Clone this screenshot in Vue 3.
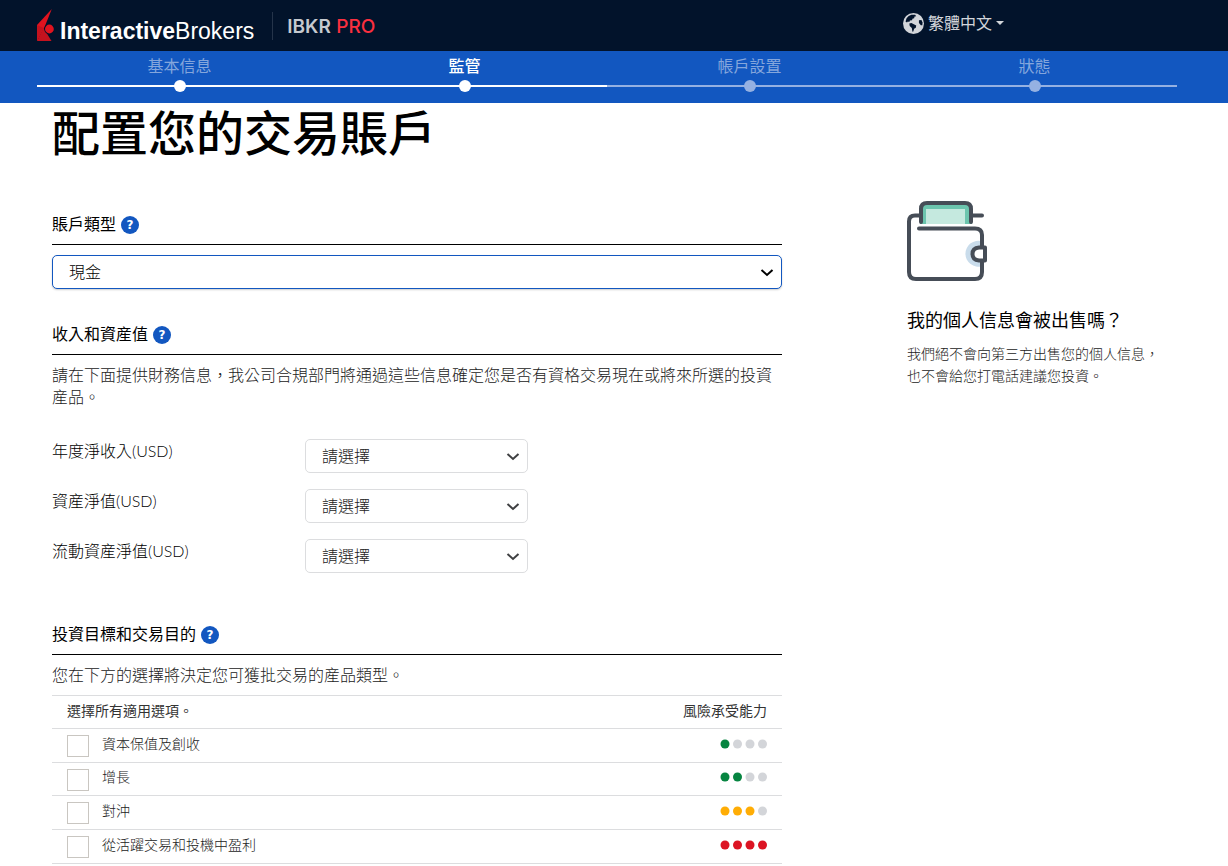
<script setup>
import { ref } from 'vue'

const steps = [
  { name: '基本信息', state: 'done' },
  { name: '監管', state: 'current' },
  { name: '帳戶設置', state: 'todo' },
  { name: '狀態', state: 'todo' },
]
const accountType = ref('cash')
const amounts = ref([
  { id: 'income', label: '年度淨收入(USD)', value: '' },
  { id: 'worth', label: '資産淨值(USD)', value: '' },
  { id: 'liquid', label: '流動資産淨值(USD)', value: '' },
])
const goals = ref([
  { id: 'preserve', label: '資本保值及創收', level: 1, tone: 'green', checked: false },
  { id: 'growth', label: '增長', level: 2, tone: 'green', checked: false },
  { id: 'hedge', label: '對沖', level: 3, tone: 'amber', checked: false },
  { id: 'active', label: '從活躍交易和投機中盈利', level: 4, tone: 'red', checked: false },
])
const dotX = [5, 17.5, 30, 42.5]
</script>

<template>
  <div class="page">
    <header class="topbar">
      <div class="container topbar-inner">
        <a class="brand" href="#" aria-label="InteractiveBrokers">
          <svg class="brand-mark" viewBox="0 0 17 32" aria-hidden="true">
            <path d="M14.8 0 L0 16 V32 L7.4 18.500 Z" fill="#e0131f" />
            <path d="M0 32 L6.6 19 L14.5 32 Z" fill="#c4121e" />
            <path d="M0 16 L6.6 19 L0 32 Z" fill="#c4121e" />
            <circle cx="12.4" cy="20" r="5.2" fill="#02132b" />
            <circle cx="12.4" cy="20" r="4.4" fill="#e0131f" />
          </svg>
          <span class="brand-name"><b>Interactive</b>Brokers</span>
        </a>
        <div class="product"><b>IBKR</b> <span>PRO</span></div>
        <button class="language" type="button">
          <svg class="globe" viewBox="0 0 20 20" aria-hidden="true">
            <circle cx="10" cy="10" r="10" fill="#d2d5da" />
            <path d="M8 1.6 L11.5 1.6 L12.6 3 L11 3.4 L10.6 5 L9 5.4 L8.6 7 L6.6 7.2 L6 8.6 L4.6 8 L3.8 9 L2.4 8 L3.4 5 L5.4 2.9 Z" fill="#02132b" />
            <path d="M6 10 L8 9.6 L12.6 12 L12.2 14 L10.6 15 L9.8 17.6 L9 17.8 L8.4 14.2 L6.4 12.4 Z" fill="#02132b" />
            <path d="M15.2 7 L17.6 6.6 L18.6 9 L18.4 11.6 L17 11.6 L15.2 9.6 Z" fill="#02132b" />
          </svg>
          <span>繁體中文</span>
          <svg class="caret" viewBox="0 0 8 4" aria-hidden="true"><path d="M0 0 H8 L4 4 Z" fill="#d2d5da" /></svg>
        </button>
      </div>
    </header>

    <nav class="progress">
      <ol class="container steps">
        <li v-for="s in steps" :key="s.name" :class="['step', s.state]">
          <span class="step-name">{{ s.name }}</span>
          <span class="track"><span class="node"></span></span>
        </li>
      </ol>
    </nav>

    <main class="container content">
      <h1>配置您的交易賬戶</h1>
      <div class="columns">
        <form class="form" @submit.prevent>
          <section class="account">
            <div class="heading">
              <h2><label for="account-type">賬戶類型</label></h2>
              <button class="help" type="button" aria-label="賬戶類型">?</button>
            </div>
            <div class="select active">
              <select id="account-type" v-model="accountType"><option value="cash">現金</option></select>
              <svg viewBox="0 0 14 8" aria-hidden="true"><path d="M1.5 1 L7 6 L12.5 1" /></svg>
            </div>
          </section>

          <section class="assets">
            <div class="heading">
              <h2>收入和資産值</h2>
              <button class="help" type="button" aria-label="收入和資産值">?</button>
            </div>
            <p class="note">請在下面提供財務信息，我公司合規部門將通過這些信息確定您是否有資格交易現在或將來所選的投資産品。</p>
            <div v-for="a in amounts" :key="a.id" class="field">
              <label :for="a.id">{{ a.label }}</label>
              <div class="select">
                <select :id="a.id" v-model="a.value"><option value="">請選擇</option></select>
                <svg viewBox="0 0 14 8" aria-hidden="true"><path d="M1.5 1 L7 6 L12.5 1" /></svg>
              </div>
            </div>
          </section>

          <section>
            <div class="heading">
              <h2>投資目標和交易目的</h2>
              <button class="help" type="button" aria-label="投資目標和交易目的">?</button>
            </div>
            <p class="note">您在下方的選擇將決定您可獲批交易的産品類型。</p>
            <table class="goals">
              <thead>
                <tr><th colspan="2">選擇所有適用選項。</th><th class="risk">風險承受能力</th></tr>
              </thead>
              <tbody>
                <tr v-for="g in goals" :key="g.id">
                  <td class="pick"><input :id="g.id" v-model="g.checked" type="checkbox" /></td>
                  <td><label :for="g.id">{{ g.label }}</label></td>
                  <td class="risk">
                    <svg class="dots" viewBox="0 0 47 10" aria-hidden="true">
                      <circle v-for="(x, i) in dotX" :key="x" :cx="x" cy="5" r="4.5" :class="i < g.level ? g.tone : 'off'" />
                    </svg>
                  </td>
                </tr>
              </tbody>
            </table>
          </section>
        </form>

        <aside class="aside">
          <svg class="wallet" viewBox="0 0 80 80" aria-hidden="true">
            <path d="M13 23 V8 Q13 2 19 2 H59 Q65 2 65 8 V23 Z" fill="#6cc5ae" />
            <path d="M19 8 H58 V23 H19 Z" fill="#c5e9df" />
            <path d="M75 40.2 A13 13 0 1 0 75 65.2 Z" fill="#c9dceb" />
            <g fill="none" stroke="#464d57" stroke-width="4" stroke-linecap="round" stroke-linejoin="round">
              <path d="M14 21 V8 Q14 2 20 2 H58 Q64 2 64 8 V21" />
              <path d="M12 14.5 H8 Q2 14.5 2 20.5 V71 Q2 78 9 78 H68 Q75 78 75 71 V61" />
              <path d="M66 14.5 H75" />
              <path d="M12 27.5 H68 Q75 27.5 75 34 V45" />
              <path d="M78 46.5 H72 Q65.5 47 65.5 53 Q65.5 59 72 59.5 H78 Z" fill="#fff" />
            </g>
          </svg>
          <h3>我的個人信息會被出售嗎？</h3>
          <p>我們絕不會向第三方出售您的個人信息，也不會給您打電話建議您投資。</p>
        </aside>
      </div>
    </main>
  </div>
</template>

<style>
body { margin: 0; background: #fff; }
</style>

<style scoped>
.page { --gutter: 14px; font-family: Lato, "Noto Sans CJK TC", sans-serif; font-size: 16px; line-height: 22px; color: #000; }
.page *, .page *::before { box-sizing: border-box; }
button, select, input { font: inherit; margin: 0; }
h1, h2, h3, p, ol { margin: 0; padding: 0; }
.container { max-width: 1140px; margin: 0 auto; }
.topbar, .progress, .content { padding-right: var(--gutter); }
.topbar { background: #02132b; }
.topbar-inner { height: 51px; display: flex; align-items: center; }
.brand { display: flex; align-items: flex-end; gap: 6px; height: 34px; color: #fff; text-decoration: none; }
.brand-mark { width: 17px; height: 32px; margin-bottom: 2px; }
.brand-name { font-family: "Liberation Sans", Arial, sans-serif; font-size: 23px; line-height: 23px; }
.product { margin-left: 18px; padding-left: 14px; height: 28px; border-left: 1px solid #25344a; font-family: Inter, sans-serif; font-size: 19px; line-height: 30px; color: #c6c9cf; white-space: nowrap; }
.product b { font-weight: 600; }
.product span { color: #fa2f3f; font-weight: 500; }
.language { display: flex; align-items: center; gap: 4px; margin-left: auto; margin-right: 173px; padding: 0 0 5px; border: 0; background: none; color: #d2d5da; line-height: 22px; }
.globe { width: 21px; height: 21px; }
.caret { width: 8px; height: 4px; }
.progress { background: #1257c0; }
.steps { display: flex; list-style: none; padding-top: 3px; height: 52px; }
.step { flex: 1; display: flex; flex-direction: column; text-align: center; color: #fff; }
.step-name { line-height: 24px; }
.done .step-name, .todo .step-name { color: #84a6dc; }
.current .step-name { font-weight: 500; }
.track { height: 16px; display: grid; place-items: center; background: linear-gradient(#fff, #fff) center / 100% 2px no-repeat; }
.todo .track { background-image: linear-gradient(#95b1e2, #95b1e2); }
.node { width: 12px; height: 12px; border-radius: 50%; background: #fff; }
.todo .node { background: #95b1e2; }
.content { max-width: 1154px; }
h1 { padding-left: 15px; font-family: "Noto Sans CJK TC", sans-serif; font-size: 48px; line-height: 54px; font-weight: 500; }
.columns { display: grid; grid-template-columns: 8fr 1fr 3fr; padding-top: 8px; }
.form { padding: 46px 15px 0; }
.heading { display: flex; align-items: flex-start; gap: 5px; height: 34px; padding-top: 2px; border-bottom: 1px solid #000; }
h2 { font-size: 16px; line-height: 22px; font-weight: 400; }
.help { width: 18px; height: 18px; margin-top: 3px; padding: 0; border: 0; border-radius: 50%; background: #1257c0; color: #fff; font: bold 12px/18px "DejaVu Sans", sans-serif; text-align: center; }
.account { margin-bottom: 32px; }
.account .select { margin-top: 10px; }
.select { position: relative; height: 34px; }
.select select { width: 100%; height: 100%; padding: 0 16px; appearance: none; border: 1px solid #dcdddf; border-radius: 5px; background: #fff; color: #222; font-weight: 300; }
.select svg { position: absolute; right: 8px; top: 14px; width: 14px; height: 8px; fill: none; stroke: #3f4042; stroke-width: 2; pointer-events: none; }
.active select { border-color: #1257c0; color: #000; box-shadow: 0 1px 2px #0003; }
.active svg { stroke: #000; }
.note { padding-top: 9px; font-weight: 300; color: #222; }
.assets { margin-bottom: 48px; }
.assets .note { margin-bottom: 31px; }
.field { display: grid; grid-template-columns: 253px minmax(0, 223px); height: 34px; margin-bottom: 16px; }
.field label { line-height: 24px; font-weight: 300; }
.goals { width: 100%; margin-top: 9px; border-collapse: collapse; font-size: 14px; line-height: 20px; color: #333; }
.goals tr { height: 34px; border-top: 1px solid #dcdddf; }
.goals thead tr, .goals tbody tr:nth-child(even) { height: 33px; }
.goals tbody tr:last-child { height: 34px; border-bottom: 1px solid #dcdddf; }
.goals th { padding: 0 15px 2px; font-weight: 400; text-align: left; }
.goals td { padding: 0 15px 4px 0; font-weight: 300; color: #222; }
.goals .pick { width: 50px; padding: 1px 0 0 15px; }
.goals .risk { text-align: right; }
.goals input { display: block; width: 22px; height: 22px; appearance: none; border: 1px solid #c9c6c1; background: #fff; }
.goals input:checked { background: #1257c0; }
.dots { display: block; width: 47px; height: 10px; margin-left: auto; }
.green { fill: #078541; }
.amber { fill: #ffad05; }
.red { fill: #dc1423; }
.off { fill: #d3d5d9; }
.aside { grid-column: 3; padding: 36px 15px 0; }
.wallet { display: block; width: 80px; height: 80px; }
h3 { margin-top: 27px; font-size: 18px; line-height: 24px; font-weight: 400; }
.aside p { margin-top: 11px; font-size: 14px; line-height: 22px; font-weight: 300; color: #222; }
</style>
